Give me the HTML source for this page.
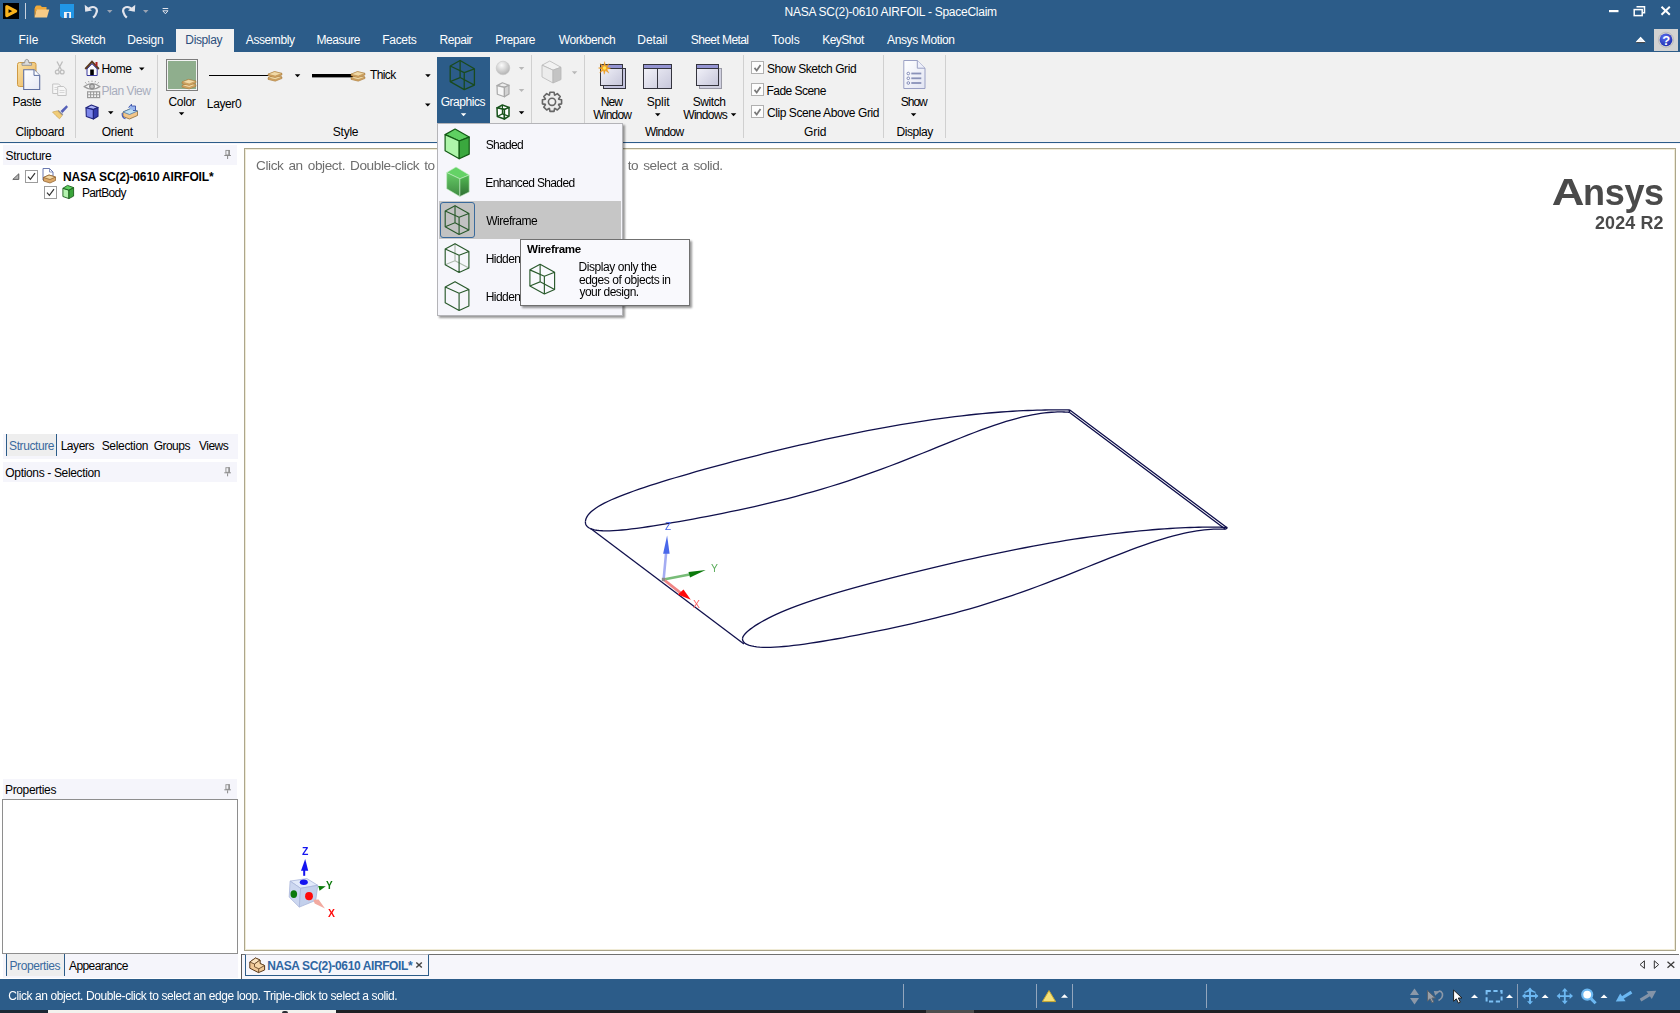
<!DOCTYPE html>
<html><head><meta charset="utf-8"><title>NASA SC(2)-0610 AIRFOIL - SpaceClaim</title><style>
html,body{margin:0;padding:0;}
body{width:1680px;height:1013px;overflow:hidden;background:#fff;position:relative;font-family:"Liberation Sans",sans-serif;}
.t{position:absolute;white-space:pre;}
.b{position:absolute;display:block;overflow:visible;}
</style></head><body>
<div class="b" style="left:0px;top:0px;width:1680px;height:52px;background:#2c5c89;"></div>
<div class="b" style="left:0px;top:52px;width:1680px;height:90px;background:#f1f1f1;"></div>
<div class="b" style="left:0px;top:142px;width:1680px;height:1px;background:#2c5c89;"></div>
<div class="b" style="left:0px;top:143px;width:1680px;height:1px;background:#f3f3fa;"></div>
<div class="b" style="left:176px;top:29px;width:58px;height:23px;background:#f1f1f1;"></div>
<div class="t" style="left:784.54px;top:5.00px;font-size:12px;line-height:14px;color:#fff;letter-spacing:-0.260px;">NASA SC(2)-0610 AIRFOIL - SpaceClaim</div>
<div class="t" style="left:18.54px;top:33.20px;font-size:12px;line-height:14px;color:#fff;letter-spacing:0.207px;">File</div>
<div class="t" style="left:70.66px;top:33.20px;font-size:12px;line-height:14px;color:#fff;letter-spacing:-0.320px;">Sketch</div>
<div class="t" style="left:127.34px;top:33.20px;font-size:12px;line-height:14px;color:#fff;letter-spacing:-0.188px;">Design</div>
<div class="t" style="left:185.34px;top:33.20px;font-size:12px;line-height:14px;color:#2d4f7c;letter-spacing:-0.367px;">Display</div>
<div class="t" style="left:245.80px;top:33.20px;font-size:12px;line-height:14px;color:#fff;letter-spacing:-0.403px;">Assembly</div>
<div class="t" style="left:316.54px;top:33.20px;font-size:12px;line-height:14px;color:#fff;letter-spacing:-0.457px;">Measure</div>
<div class="t" style="left:382.34px;top:33.20px;font-size:12px;line-height:14px;color:#fff;letter-spacing:-0.324px;">Facets</div>
<div class="t" style="left:439.54px;top:33.20px;font-size:12px;line-height:14px;color:#fff;letter-spacing:-0.452px;">Repair</div>
<div class="t" style="left:495.34px;top:33.20px;font-size:12px;line-height:14px;color:#fff;letter-spacing:-0.420px;">Prepare</div>
<div class="t" style="left:558.80px;top:33.20px;font-size:12px;line-height:14px;color:#fff;letter-spacing:-0.445px;">Workbench</div>
<div class="t" style="left:637.34px;top:33.20px;font-size:12px;line-height:14px;color:#fff;letter-spacing:-0.096px;">Detail</div>
<div class="t" style="left:690.76px;top:33.20px;font-size:12px;line-height:14px;color:#fff;letter-spacing:-0.576px;">Sheet Metal</div>
<div class="t" style="left:771.76px;top:33.20px;font-size:12px;line-height:14px;color:#fff;letter-spacing:-0.015px;">Tools</div>
<div class="t" style="left:822.34px;top:33.20px;font-size:12px;line-height:14px;color:#fff;letter-spacing:-0.567px;">KeyShot</div>
<div class="t" style="left:887.00px;top:33.20px;font-size:12px;line-height:14px;color:#fff;letter-spacing:-0.362px;">Ansys Motion</div>
<div class="b" style="left:75px;top:55px;width:1px;height:83px;background:#d0d0d0;"></div>
<div class="b" style="left:157px;top:55px;width:1px;height:83px;background:#d0d0d0;"></div>
<div class="b" style="left:531px;top:55px;width:1px;height:83px;background:#d0d0d0;"></div>
<div class="b" style="left:584px;top:55px;width:1px;height:83px;background:#d0d0d0;"></div>
<div class="b" style="left:743px;top:55px;width:1px;height:83px;background:#d0d0d0;"></div>
<div class="b" style="left:883px;top:55px;width:1px;height:83px;background:#d0d0d0;"></div>
<div class="b" style="left:945px;top:55px;width:1px;height:83px;background:#d0d0d0;"></div>
<div class="t" style="left:15.40px;top:125.00px;font-size:12px;line-height:14px;color:#000;letter-spacing:-0.280px;">Clipboard</div>
<div class="t" style="left:101.76px;top:125.00px;font-size:12px;line-height:14px;color:#000;letter-spacing:-0.280px;">Orient</div>
<div class="t" style="left:332.76px;top:125.00px;font-size:12px;line-height:14px;color:#000;letter-spacing:-0.230px;">Style</div>
<div class="t" style="left:645.00px;top:125.00px;font-size:12px;line-height:14px;color:#000;letter-spacing:-0.704px;">Window</div>
<div class="t" style="left:804.10px;top:125.00px;font-size:12px;line-height:14px;color:#000;letter-spacing:-0.087px;">Grid</div>
<div class="t" style="left:896.54px;top:125.00px;font-size:12px;line-height:14px;color:#000;letter-spacing:-0.433px;">Display</div>
<svg class="b" style="left:0;top:0" width="1680" height="1013" viewBox="0 0 1680 1013"><defs>
<linearGradient id="gPaste" x1="0" y1="0" x2="1" y2="1"><stop offset="0" stop-color="#fbe3a8"/><stop offset="1" stop-color="#e9b25a"/></linearGradient>
<linearGradient id="gWin" x1="0" y1="0" x2="1" y2="1"><stop offset="0" stop-color="#f4f4fb"/><stop offset="1" stop-color="#c9c9dd"/></linearGradient>
<linearGradient id="gDoc" x1="0" y1="0" x2="1" y2="1"><stop offset="0" stop-color="#ffffff"/><stop offset="1" stop-color="#e6e8f4"/></linearGradient>
<radialGradient id="gSph" cx="0.4" cy="0.3" r="0.7"><stop offset="0" stop-color="#fafafa"/><stop offset="1" stop-color="#b9b9b9"/></radialGradient>
<radialGradient id="gHelp" cx="0.4" cy="0.3" r="0.8"><stop offset="0" stop-color="#5a6cf0"/><stop offset="1" stop-color="#1a2aa8"/></radialGradient>
</defs><rect x="3" y="3" width="16" height="16" fill="#000" rx="0" /><path d="M6.9,6.6 L15.6,11.1 L6.9,15.6 Z" fill="none" stroke="#f7b21c" stroke-width="3.3" stroke-linejoin="round"/><rect x="25" y="3" width="1" height="16" fill="#c9d2de" rx="0" /><path d="M35,7 L36.5,5.5 L40.5,5.5 L42,7 L46.5,7 L46.5,10 L35,10 Z" fill="#efa93a" /><path d="M36.5,9.5 L49.3,9.5 L47,17.5 L34.5,17.5 Z" fill="#f8cb86" /><path d="M34.5,8 L36.5,9.5 L34.5,17.5 Z" fill="#e79a2c" /><path d="M60,4 L74,4 L74,18 L62,18 L60,16 Z" fill="#2196e6" /><rect x="64" y="12" width="7" height="6" fill="#f4f4f4" rx="0" /><rect x="66.8" y="13" width="2.4" height="5" fill="#2a78c8" rx="0" /><path d="M86.5,10.5 C 92,4.5 98.5,7 96.5,12.5 C 96,14.5 95,16 93.2,17.6" fill="none" stroke="#e2e4ec" stroke-width="2.2" /><path d="M84.7,4.8 L85.2,11.8 L92,10.6 Z" fill="#e2e4ec" /><polygon points="107,10 112.5,10 109.75,13" fill="#9aa4b4" /><path d="M133.5,10.5 C 128,4.5 121.5,7 123.5,12.5 C 124,14.5 125,16 126.8,17.6" fill="none" stroke="#e2e4ec" stroke-width="2.2" /><path d="M135.3,4.8 L134.8,11.8 L128,10.6 Z" fill="#e2e4ec" /><polygon points="143,10 148.5,10 145.75,13" fill="#9aa4b4" /><rect x="162.6" y="8" width="5.6" height="1" fill="#e2e4ec" rx="0" /><path d="M162.8,10.8 L168,10.8 L165.4,13.8 Z" fill="none" stroke="#e2e4ec" stroke-width="1" /><rect x="1609" y="10" width="9.5" height="2.2" fill="#fff" rx="0" /><path d="M1636.5,6.8 h8 v6 h-2.2" fill="none" stroke="#fff" stroke-width="1.5" /><rect x="1634.2" y="9.6" width="8" height="6" fill="none" stroke="#fff" stroke-width="1.5" rx="0" /><path d="M1661.5,6.8 L1669.8,14.8 M1669.8,6.8 L1661.5,14.8" fill="none" stroke="#fff" stroke-width="2" /><polygon points="1636.6,42 1640.6,37.6 1644.6,42" fill="#e6eef8" stroke="#fff" stroke-width="1.4" stroke-linejoin="round"/><line x1="1636.2" y1="42.6" x2="1645" y2="42.6" stroke="#3a3a3a" stroke-width="1" /><rect x="1654" y="29" width="24" height="22" fill="#d2d2d2" rx="0" /><circle cx="1666" cy="39.8" r="7.6" fill="none" stroke="#bcbcbc" stroke-width="1" /><circle cx="1666" cy="39.8" r="6.4" fill="url(#gHelp)" /><rect x="17.5" y="62.5" width="18.5" height="24" fill="url(#gPaste)" stroke="#cf9a44" stroke-width="1" rx="2" /><path d="M22,65.3 v-2.3 h2.6 q0,-3.6 2.2,-3.6 q2.2,0 2.2,3.6 h2.6 v2.3 Z" fill="#dcdcdc" stroke="#909090" stroke-width="0.9" /><path d="M23.7,69.7 h10.3 l5.7,5.7 v14.1 h-16 Z" fill="url(#gDoc)" stroke="#5f6fa0" stroke-width="1.1" /><path d="M34,69.7 v5.7 h5.7" fill="#fff" stroke="#5f6fa0" stroke-width="1" /><path d="M57,61.5 L61.5,70 M62.5,61.5 L58,70" fill="none" stroke="#bdbdbd" stroke-width="1.3" /><circle cx="57.3" cy="72" r="1.9" fill="none" stroke="#bdbdbd" stroke-width="1.3" /><circle cx="62.2" cy="72" r="1.9" fill="none" stroke="#bdbdbd" stroke-width="1.3" /><path d="M52.7,84 h6 l2.5,2.5 v7 h-8.5 Z" fill="#f6f6f6" stroke="#c4c4c4" stroke-width="1" /><path d="M57.7,86.5 h6 l2.5,2.5 v6.5 h-8.5 Z" fill="#f6f6f6" stroke="#c4c4c4" stroke-width="1" /><path d="M54.5,87.5 h3 M54.5,89.5 h3 M59.5,90.5 h5 M59.5,92.5 h5" fill="none" stroke="#cfcfcf" stroke-width="0.8" /><path d="M60.5,111 L66.5,105.2 L68,107 L62.5,113 Z" fill="#5560b8" /><path d="M58.5,110 L63.3,114.2 L61.8,115.8 L57,111.6 Z" fill="#8c8c9c" /><path d="M52.5,112 L57.5,110.8 L62.2,115.5 L59.5,118.8 Q56,116 52.5,112 Z" fill="#f0cc78" stroke="#c9a048" stroke-width="0.6" /><path d="M85.3,69 L92,61.8 L98.8,69" fill="none" stroke="#5a3a1e" stroke-width="2" /><rect x="95.5" y="62" width="2" height="4" fill="#b02020" rx="0" /><path d="M87,69 v6.5 h10.2 V69 L92,63.8 Z" fill="#fafafa" stroke="#3a3aa0" stroke-width="1" /><rect x="90.2" y="69.5" width="3.6" height="5.5" fill="#000" rx="0" /><polygon points="139,67.5 144.5,67.5 141.75,70.5" fill="#000" /><path d="M84.3,86.6 Q92,80.6 99.7,86.6 Q92,92 84.3,86.6 Z" fill="#f6f6f6" stroke="#9c9c9c" stroke-width="1.3" /><circle cx="92" cy="86.4" r="2.3" fill="#c4c4c4" stroke="#8e8e8e" stroke-width="1.2" /><path d="M86.4,83.6 L85.2,82.2 M89,82.4 L88.5,81 M92,82 V80.6 M95,82.4 L95.5,81 M97.6,83.6 L98.8,82.2" fill="none" stroke="#a4a4a4" stroke-width="1" /><rect x="87.6" y="91.8" width="12" height="5.8" fill="#f6f6f6" stroke="#9c9c9c" stroke-width="1.2" rx="0" /><path d="M90.6,91.8 v5.8 M93.6,91.8 v5.8 M96.6,91.8 v5.8 M87.6,94.7 h12" fill="none" stroke="#9c9c9c" stroke-width="1.1" /><path d="M86.00,107.80 L91.40,105.00 L98.00,107.40 L93.40,109.60 Z" fill="#aab2f6" stroke="#20247c" stroke-width="1.1" stroke-linejoin="round"/><path d="M86.00,107.80 L93.40,109.60 L93.40,119.00 L86.30,116.50 Z" fill="#7c86ea" stroke="#20247c" stroke-width="1.1" stroke-linejoin="round"/><path d="M93.40,109.60 L98.00,107.40 L98.00,116.20 L93.40,119.00 Z" fill="#343cae" stroke="#20247c" stroke-width="1.1" stroke-linejoin="round"/><polygon points="108,111.2 113.5,111.2 110.75,114.2" fill="#000" /><path d="M123,112 L131,108.5 L137.5,111 L137.5,115.5 L129.5,119 L123,116.5 Z" fill="#f2c68a" stroke="#8a6a3a" stroke-width="0.8" /><path d="M123,112 L131,108.5 L137.5,111 L129.5,114.5 Z" fill="#bfe0f2" stroke="#4a78a8" stroke-width="0.8" /><path d="M128.5,107.5 L131.5,104.2 L131.5,106 L135.5,106 L135.5,110.5 L133,110.5" fill="#9ab6ee" stroke="#3a50a8" stroke-width="0.9" /><path d="M122.3,113 Q121.5,117.5 125.5,118.8" fill="none" stroke="#4a60b8" stroke-width="1.2" /></svg>
<div class="t" style="left:12.54px;top:94.60px;font-size:12px;line-height:14px;color:#000;letter-spacing:-0.430px;">Paste</div>
<div class="t" style="left:101.54px;top:61.90px;font-size:12px;line-height:14px;color:#000;letter-spacing:-0.580px;">Home</div>
<div class="t" style="left:101.54px;top:83.60px;font-size:12px;line-height:14px;color:#a8adbd;letter-spacing:-0.462px;">Plan View</div>
<div class="t" style="left:1662.21px;top:33.00px;font-size:13px;line-height:15px;color:#fff;letter-spacing:0.000px;font-weight:bold;">?</div>
<svg class="b" style="left:0;top:0" width="1680" height="1013" viewBox="0 0 1680 1013"><defs>
<linearGradient id="gWin2" x1="0" y1="0" x2="1" y2="1"><stop offset="0" stop-color="#f6f6fc"/><stop offset="1" stop-color="#c6c6da"/></linearGradient>
<linearGradient id="gDoc2" x1="0" y1="0" x2="1" y2="1"><stop offset="0" stop-color="#ffffff"/><stop offset="1" stop-color="#e2e5f3"/></linearGradient>
<radialGradient id="gSph2" cx="0.4" cy="0.3" r="0.7"><stop offset="0" stop-color="#fbfbfb"/><stop offset="1" stop-color="#b4b4b4"/></radialGradient>
</defs><rect x="166.5" y="59.5" width="31" height="31" fill="#f4f4f4" stroke="#7c7c7c" stroke-width="1" rx="0" /><rect x="168" y="61" width="28" height="28" fill="#8fae8d" rx="0" /><path d="M182,85.6 L188.5,83.0 L196,84.8 L196,86.3 L189.2,89.0 L182,87.2 Z" fill="#d9a866" stroke="#9c7030" stroke-width="0.5" /><path d="M182,85.6 L188.5,83.0 L196,84.8 L189.2,87.5 Z" fill="#f1d9a6" stroke="#a87c3c" stroke-width="0.5" /><path d="M182,82.0 L188.5,79.4 L196,81.2 L196,82.7 L189.2,85.4 L182,83.60000000000001 Z" fill="#d9a866" stroke="#9c7030" stroke-width="0.5" /><path d="M182,82.0 L188.5,79.4 L196,81.2 L189.2,83.9 Z" fill="#f1d9a6" stroke="#a87c3c" stroke-width="0.5" /><polygon points="178.8,112.2 184.3,112.2 181.55,115.2" fill="#000" /><rect x="209" y="75" width="60" height="1" fill="#000" rx="0" /><path d="M268,77.79999999999998 L274.5,75.19999999999999 L282,76.99999999999999 L282,78.49999999999999 L275.2,81.19999999999999 L268,79.39999999999999 Z" fill="#d9a866" stroke="#9c7030" stroke-width="0.5" /><path d="M268,77.79999999999998 L274.5,75.19999999999999 L282,76.99999999999999 L275.2,79.69999999999999 Z" fill="#f1d9a6" stroke="#a87c3c" stroke-width="0.5" /><path d="M268,74.19999999999999 L274.5,71.6 L282,73.39999999999999 L282,74.89999999999999 L275.2,77.6 L268,75.8 Z" fill="#d9a866" stroke="#9c7030" stroke-width="0.5" /><path d="M268,74.19999999999999 L274.5,71.6 L282,73.39999999999999 L275.2,76.1 Z" fill="#f1d9a6" stroke="#a87c3c" stroke-width="0.5" /><polygon points="294.8,74.3 300.3,74.3 297.55,77.3" fill="#000" /><rect x="312" y="74" width="41" height="3.4" fill="#000" rx="0" /><path d="M351,77.79999999999998 L357.5,75.19999999999999 L365,76.99999999999999 L365,78.49999999999999 L358.2,81.19999999999999 L351,79.39999999999999 Z" fill="#d9a866" stroke="#9c7030" stroke-width="0.5" /><path d="M351,77.79999999999998 L357.5,75.19999999999999 L365,76.99999999999999 L358.2,79.69999999999999 Z" fill="#f1d9a6" stroke="#a87c3c" stroke-width="0.5" /><path d="M351,74.19999999999999 L357.5,71.6 L365,73.39999999999999 L365,74.89999999999999 L358.2,77.6 L351,75.8 Z" fill="#d9a866" stroke="#9c7030" stroke-width="0.5" /><path d="M351,74.19999999999999 L357.5,71.6 L365,73.39999999999999 L358.2,76.1 Z" fill="#f1d9a6" stroke="#a87c3c" stroke-width="0.5" /><polygon points="425.2,74.3 430.7,74.3 427.95,77.3" fill="#000" /><polygon points="425,103.4 430.5,103.4 427.75,106.4" fill="#000" /><rect x="437" y="57" width="53" height="66.3" fill="#2c5c89" rx="0" /><path d="M450.20,66.03 L460.12,60.50 L474.40,68.79 L464.24,72.61 Z M450.20,66.03 L450.20,81.60 L464.24,89.60 L464.24,72.61 M464.24,89.60 L474.40,85.09 L474.40,68.79" fill="none" stroke="#1a4a1e" stroke-width="1.3" stroke-linejoin="round"/><path d="M460.12,60.50 L460.12,77.49 L450.20,81.60 M460.12,77.49 L474.40,85.09" fill="none" stroke="#1a4a1e" stroke-width="1.3" /><polygon points="460.8,113.3 466.3,113.3 463.55,116.3" fill="#fff" /><circle cx="503" cy="68" r="6.8" fill="url(#gSph2)" stroke="#c8c8c8" stroke-width="0.6" /><polygon points="518.8,67 524.3,67 521.55,70" fill="#b8b8b8" /><path d="M497.00,85.60 L502.40,82.80 L509.00,85.20 L504.40,87.40 Z" fill="#ececec" stroke="#a8a8a8" stroke-width="1.2" stroke-linejoin="round"/><path d="M497.00,85.60 L504.40,87.40 L504.40,96.80 L497.30,94.30 Z" fill="#f6f6f6" stroke="#a8a8a8" stroke-width="1.2" stroke-linejoin="round"/><path d="M504.40,87.40 L509.00,85.20 L509.00,94.00 L504.40,96.80 Z" fill="#d2d2d2" stroke="#a8a8a8" stroke-width="1.2" stroke-linejoin="round"/><polygon points="518.8,89 524.3,89 521.55,92" fill="#b8b8b8" /><path d="M497.00,107.80 L502.40,105.00 L509.00,107.40 L504.40,109.60 Z" fill="#fff" stroke="#17521a" stroke-width="1.5" stroke-linejoin="round"/><path d="M497.00,107.80 L504.40,109.60 L504.40,119.00 L497.30,116.50 Z" fill="#fff" stroke="#17521a" stroke-width="1.5" stroke-linejoin="round"/><path d="M504.40,109.60 L509.00,107.40 L509.00,116.20 L504.40,119.00 Z" fill="#fff" stroke="#17521a" stroke-width="1.5" stroke-linejoin="round"/><path d="M502.40,105.00 L502.40,113.90 L497.30,116.50 M502.40,113.90 L509.00,116.20" fill="none" stroke="#17521a" stroke-width="1.2000000000000002" /><polygon points="518.8,111.2 524.3,111.2 521.55,114.2" fill="#000" /><path d="M542.00,65.18 L549.79,61.00 L561.00,67.27 L553.02,70.15 Z" fill="#f2f2f2" stroke="#b8b8b8" stroke-width="0.8" stroke-linejoin="round"/><path d="M542.00,65.18 L553.02,70.15 L553.02,83.00 L542.00,76.95 Z" fill="#ececec" stroke="#b8b8b8" stroke-width="0.8" stroke-linejoin="round"/><path d="M553.02,70.15 L561.00,67.27 L561.00,79.59 L553.02,83.00 Z" fill="#c4c4c4" stroke="#b8b8b8" stroke-width="0.8" stroke-linejoin="round"/><polygon points="571.8,71.3 577.3,71.3 574.55,74.3" fill="#b8b8b8" /><polygon points="561.58,99.76 561.58,103.84 558.71,104.40 558.59,104.71 560.22,107.13 557.33,110.02 554.91,108.39 554.60,108.51 554.04,111.38 549.96,111.38 549.40,108.51 549.09,108.39 546.67,110.02 543.78,107.13 545.41,104.71 545.29,104.40 542.42,103.84 542.42,99.76 545.29,99.20 545.41,98.89 543.78,96.47 546.67,93.58 549.09,95.21 549.40,95.09 549.96,92.22 554.04,92.22 554.60,95.09 554.91,95.21 557.33,93.58 560.22,96.47 558.59,98.89 558.71,99.20" fill="#ececec" stroke="#666" stroke-width="1.6" stroke-linejoin="round"/><circle cx="552" cy="101.8" r="3.6" fill="#f1f1f1" stroke="#666" stroke-width="1.6" /><rect x="603.5" y="68.5" width="22" height="20" fill="#c4c4de" stroke="#34343e" stroke-width="1" rx="0" /><rect x="600.5" y="64.5" width="22" height="21" fill="url(#gWin2)" stroke="#34343e" stroke-width="1" rx="0" /><rect x="601" y="65" width="21" height="3.2" fill="#9494d2" rx="0" /><line x1="600.5" y1="68.5" x2="622.5" y2="68.5" stroke="#34343e" stroke-width="1" /><path d="M605,58.5 L606.3,64 L610.5,61 L607.8,65.5 L612.5,66.5 L607.8,68 L610.3,72.5 L606,69.5 L604.5,74 L603.5,69.3 L599,72 L601.8,67.7 L597.5,66.3 L602,65 L599.5,60.8 L603.8,63.8 Z" fill="#f5a623" stroke="#e08a10" stroke-width="0.4" transform="translate(604.6 68) scale(0.82) translate(-605 -66.3)"/><circle cx="604.5" cy="68" r="1.7" fill="#ffe45a" /><rect x="643.5" y="64.5" width="28" height="24" fill="url(#gWin2)" stroke="#34343e" stroke-width="1" rx="0" /><rect x="644" y="65" width="27" height="3.2" fill="#9494d2" rx="0" /><line x1="643.5" y1="68.5" x2="671.5" y2="68.5" stroke="#34343e" stroke-width="1" /><line x1="657.5" y1="68" x2="657.5" y2="88.5" stroke="#34343e" stroke-width="1" /><polygon points="655,113.3 660.5,113.3 657.75,116.3" fill="#000" /><rect x="699.5" y="68.5" width="22" height="20" fill="#d0d0e0" stroke="#9a9aa6" stroke-width="1" rx="0" /><rect x="696.5" y="64.5" width="22" height="21" fill="url(#gWin2)" stroke="#34343e" stroke-width="1" rx="0" /><rect x="697" y="65" width="21" height="3.2" fill="#9494d2" rx="0" /><line x1="696.5" y1="68.5" x2="718.5" y2="68.5" stroke="#34343e" stroke-width="1" /><polygon points="730.8,113.3 736.3,113.3 733.55,116.3" fill="#000" /><rect x="751.5" y="61.5" width="12" height="12" fill="#fdfdfd" stroke="#b0b0b0" stroke-width="1" rx="0" /><path d="M754.5,67.9 L756.7,70.6 L760.5,65" fill="none" stroke="#7a7a7a" stroke-width="1.7" /><rect x="751.5" y="83.5" width="12" height="12" fill="#fdfdfd" stroke="#b0b0b0" stroke-width="1" rx="0" /><path d="M754.5,89.9 L756.7,92.6 L760.5,87" fill="none" stroke="#7a7a7a" stroke-width="1.7" /><rect x="751.5" y="105.5" width="12" height="12" fill="#fdfdfd" stroke="#b0b0b0" stroke-width="1" rx="0" /><path d="M754.5,111.9 L756.7,114.6 L760.5,109" fill="none" stroke="#7a7a7a" stroke-width="1.7" /><path d="M903.8,60.5 h13.5 l7.7,7.7 v20.3 h-21.2 Z" fill="url(#gDoc2)" stroke="#9aa0c4" stroke-width="1" /><path d="M917.3,60.5 v7.7 h7.7" fill="#eef0fa" stroke="#9aa0c4" stroke-width="1" /><circle cx="908.3" cy="73.5" r="1.3" fill="#fff" stroke="#6a74a8" stroke-width="0.8" /><rect x="911.3" y="72.6" width="10" height="1.8" fill="#8a92b8" rx="0" /><circle cx="908.3" cy="78.3" r="1.3" fill="#fff" stroke="#6a74a8" stroke-width="0.8" /><rect x="911.3" y="77.39999999999999" width="10" height="1.8" fill="#8a92b8" rx="0" /><circle cx="908.3" cy="83" r="1.3" fill="#fff" stroke="#6a74a8" stroke-width="0.8" /><rect x="911.3" y="82.1" width="10" height="1.8" fill="#8a92b8" rx="0" /><polygon points="910.8,113.3 916.3,113.3 913.55,116.3" fill="#000" /></svg>
<div class="t" style="left:168.60px;top:94.70px;font-size:12px;line-height:14px;color:#000;letter-spacing:-0.400px;">Color</div>
<div class="t" style="left:206.84px;top:96.80px;font-size:12px;line-height:14px;color:#000;letter-spacing:-0.376px;">Layer0</div>
<div class="t" style="left:370.06px;top:67.70px;font-size:12px;line-height:14px;color:#000;letter-spacing:-0.625px;">Thick</div>
<div class="t" style="left:440.70px;top:94.70px;font-size:12px;line-height:14px;color:#fff;letter-spacing:-0.469px;">Graphics</div>
<div class="t" style="left:600.74px;top:94.70px;font-size:12px;line-height:14px;color:#000;letter-spacing:-0.900px;">New</div>
<div class="t" style="left:593.30px;top:107.70px;font-size:12px;line-height:14px;color:#000;letter-spacing:-0.804px;">Window</div>
<div class="t" style="left:646.66px;top:94.70px;font-size:12px;line-height:14px;color:#000;letter-spacing:-0.125px;">Split</div>
<div class="t" style="left:692.76px;top:94.70px;font-size:12px;line-height:14px;color:#000;letter-spacing:-0.416px;">Switch</div>
<div class="t" style="left:683.30px;top:107.70px;font-size:12px;line-height:14px;color:#000;letter-spacing:-0.723px;">Windows</div>
<div class="t" style="left:766.96px;top:61.80px;font-size:12px;line-height:14px;color:#000;letter-spacing:-0.429px;">Show Sketch Grid</div>
<div class="t" style="left:766.54px;top:83.80px;font-size:12px;line-height:14px;color:#000;letter-spacing:-0.549px;">Fade Scene</div>
<div class="t" style="left:766.90px;top:105.70px;font-size:12px;line-height:14px;color:#000;letter-spacing:-0.410px;">Clip Scene Above Grid</div>
<div class="t" style="left:900.76px;top:94.70px;font-size:12px;line-height:14px;color:#000;letter-spacing:-1.007px;">Show</div>
<div class="b" style="left:3px;top:145px;width:234px;height:20px;background:#f5f5fb;"></div>
<div class="t" style="left:5.56px;top:149.00px;font-size:12px;line-height:14px;color:#000;letter-spacing:-0.317px;">Structure</div>
<div class="b" style="left:3px;top:434px;width:235px;height:25px;background:#f5f5fb;"></div>
<div class="b" style="left:6px;top:434px;width:51px;height:22px;background:#eeeeee;border-left:1px solid #2c5c89;border-right:1px solid #2c5c89;box-sizing:border-box;"></div>
<div class="t" style="left:9.06px;top:438.70px;font-size:12px;line-height:14px;color:#3a6a9e;letter-spacing:-0.418px;">Structure</div>
<div class="t" style="left:60.64px;top:438.70px;font-size:12px;line-height:14px;color:#000;letter-spacing:-0.444px;">Layers</div>
<div class="t" style="left:101.66px;top:438.70px;font-size:12px;line-height:14px;color:#000;letter-spacing:-0.315px;">Selection</div>
<div class="t" style="left:153.70px;top:438.70px;font-size:12px;line-height:14px;color:#000;letter-spacing:-0.528px;">Groups</div>
<div class="t" style="left:199.00px;top:438.70px;font-size:12px;line-height:14px;color:#000;letter-spacing:-0.520px;">Views</div>
<div class="b" style="left:3px;top:462px;width:234px;height:20px;background:#f5f5fb;"></div>
<div class="t" style="left:5.36px;top:465.50px;font-size:12px;line-height:14px;color:#000;letter-spacing:-0.347px;">Options - Selection</div>
<div class="b" style="left:3px;top:779px;width:234px;height:20px;background:#f5f5fb;"></div>
<div class="t" style="left:5.04px;top:783.00px;font-size:12px;line-height:14px;color:#000;letter-spacing:-0.371px;">Properties</div>
<div class="b" style="left:2px;top:799px;width:236px;height:155px;background:#fff;border:1px solid #8e8e8e;box-sizing:border-box;"></div>
<div class="b" style="left:3px;top:954px;width:235px;height:24px;background:#f5f5fb;"></div>
<div class="b" style="left:6px;top:954px;width:59px;height:22px;background:#eeeeee;border-left:1px solid #2c5c89;border-right:1px solid #2c5c89;box-sizing:border-box;"></div>
<div class="t" style="left:9.44px;top:959.00px;font-size:12px;line-height:14px;color:#3a6a9e;letter-spacing:-0.393px;">Properties</div>
<div class="t" style="left:69.00px;top:959.00px;font-size:12px;line-height:14px;color:#000;letter-spacing:-0.589px;">Appearance</div>
<div class="t" style="left:63.02px;top:170.00px;font-size:12px;line-height:14px;color:#000;letter-spacing:-0.170px;font-weight:bold;">NASA SC(2)-0610 AIRFOIL*</div>
<div class="t" style="left:81.94px;top:185.90px;font-size:12px;line-height:14px;color:#000;letter-spacing:-0.674px;">PartBody</div>
<svg class="b" style="left:0;top:0" width="1680" height="1013" viewBox="0 0 1680 1013"><rect x="225.9" y="150.4" width="3.4" height="4.6" fill="#f0f0f4" stroke="#909090" stroke-width="0.9" rx="0" /><rect x="228.4" y="150" width="1.3" height="5" fill="#8a8a8a" rx="0" /><rect x="224.3" y="155" width="6.6" height="1" fill="#8a8a8a" rx="0" /><rect x="227.10000000000002" y="156" width="1" height="3" fill="#8a8a8a" rx="0" /><rect x="225.9" y="467.7" width="3.4" height="4.6" fill="#f0f0f4" stroke="#909090" stroke-width="0.9" rx="0" /><rect x="228.4" y="467.3" width="1.3" height="5" fill="#8a8a8a" rx="0" /><rect x="224.3" y="472.3" width="6.6" height="1" fill="#8a8a8a" rx="0" /><rect x="227.10000000000002" y="473.3" width="1" height="3" fill="#8a8a8a" rx="0" /><rect x="225.9" y="784.6999999999999" width="3.4" height="4.6" fill="#f0f0f4" stroke="#909090" stroke-width="0.9" rx="0" /><rect x="228.4" y="784.3" width="1.3" height="5" fill="#8a8a8a" rx="0" /><rect x="224.3" y="789.3" width="6.6" height="1" fill="#8a8a8a" rx="0" /><rect x="227.10000000000002" y="790.3" width="1" height="3" fill="#8a8a8a" rx="0" /><polygon points="18.8,173.8 18.8,179.4 12.8,179.4" fill="#b4b4b4" stroke="#555" stroke-width="0.9" /><rect x="25.5" y="170.5" width="12" height="12" fill="#fff" stroke="#9c9c9c" stroke-width="1" rx="0" /><path d="M28,176.6 L30.4,179.4 L35,173.2" fill="none" stroke="#333" stroke-width="1.2" /><rect x="44.5" y="186.5" width="12" height="12" fill="#fff" stroke="#9c9c9c" stroke-width="1" rx="0" /><path d="M47,192.6 L49.4,195.4 L54,189.2" fill="none" stroke="#333" stroke-width="1.2" /><path d="M43,168.5 h6.5 l3.5,3.5 v8 h-10 Z" fill="#fff" stroke="#6a78b0" stroke-width="1" /><path d="M49.5,168.5 v3.5 h3.5" fill="none" stroke="#6a78b0" stroke-width="0.8" /><path d="M43.5,177.5 L49,175 L55.5,177 L55.5,180.5 L50,183 L43.5,181 Z" fill="#dba868" stroke="#8a5a28" stroke-width="0.7" /><path d="M43.5,177.5 L49,175 L55.5,177 L50,179.5 Z" fill="#f3d8a4" stroke="#8a5a28" stroke-width="0.7" /><path d="M62.9,188.3 L68.9,190.1 L68.9,198.6 L62.9,196.5 Z" fill="#b4f3ae" stroke="#1c5c1c" stroke-width="0.9" stroke-linejoin="round"/><path d="M68.9,190.1 L73.6,187.6 L73.6,196.1 L68.9,198.6 Z" fill="#3aa53a" stroke="#1c5c1c" stroke-width="0.9" stroke-linejoin="round"/><path d="M62.9,188.3 L67.5,185.4 L73.6,187.6 L68.9,190.1 Z" fill="#5fcf5f" stroke="#1c5c1c" stroke-width="0.9" stroke-linejoin="round"/></svg>
<div class="b" style="left:244px;top:148px;width:1432px;height:803px;background:#fff;border:1px solid #aca68c;box-sizing:border-box;"></div>
<div class="b" style="left:245px;top:149px;width:1430px;height:1px;background:#f0ebd6;"></div>
<div class="b" style="left:245px;top:149px;width:1px;height:801px;background:#f0ebd6;"></div>
<div class="b" style="left:245px;top:949px;width:1430px;height:1px;background:#f0ebd6;"></div>
<div class="b" style="left:1674px;top:149px;width:1px;height:801px;background:#f0ebd6;"></div>
<div class="t" style="left:255.62px;top:157.90px;font-size:13.6px;line-height:15px;color:#6e6e6e;letter-spacing:-0.398px;word-spacing:1.6px;will-change:transform;">Click an object. Double-click to select an edge loop. Triple-click to select a solid.</div>
<div class="t" style="left:1551.76px;top:171.20px;font-size:37.8px;line-height:42px;font-weight:bold;color:#4a4a4a;will-change:transform;"><span style="display:inline-block;transform:scaleX(1.199);transform-origin:0.94px 50%;">A</span><span style="font-size:36px;letter-spacing:-0.360px;margin-left:3.81px;">nsys</span></div>
<div class="t" style="left:1595.16px;top:213.20px;font-size:17.9px;line-height:20px;color:#4a4a4a;letter-spacing:0.134px;font-weight:bold;will-change:transform;">2024 R2</div>
<svg class="b" style="left:0;top:0" width="1680" height="1013" viewBox="0 0 1680 1013"><path d="M585.40,521.70 L585.65,520.01 L586.20,518.32 L587.04,516.64 L588.18,514.95 L589.62,513.27 L591.34,511.58 L593.36,509.91 L595.67,508.23 L598.26,506.55 L601.14,504.87 L604.29,503.18 L607.72,501.48 L611.43,499.78 L615.40,498.06 L619.63,496.32 L624.12,494.57 L628.86,492.80 L633.85,491.00 L639.09,489.18 L644.55,487.34 L650.25,485.47 L656.16,483.58 L662.29,481.66 L668.62,479.72 L675.16,477.75 L681.88,475.76 L688.79,473.76 L695.87,471.73 L703.11,469.70 L710.51,467.65 L718.06,465.59 L725.74,463.52 L733.55,461.45 L741.47,459.38 L749.51,457.32 L757.64,455.26 L765.86,453.22 L774.16,451.18 L782.52,449.17 L790.94,447.17 L799.40,445.20 L807.90,443.26 L816.43,441.35 L824.97,439.47 L833.51,437.64 L842.04,435.84 L850.56,434.08 L859.04,432.38 L867.49,430.73 L875.88,429.13 L884.22,427.58 L892.48,426.10 L900.66,424.68 L908.75,423.32 L916.74,422.04 L924.62,420.81 L932.37,419.66 L940.00,418.58 L947.48,417.58 L954.81,416.64 L961.98,415.78 L968.99,414.98 L975.82,414.26 L982.46,413.60 L988.91,413.01 L995.16,412.49 L1001.21,412.02 L1007.03,411.62 L1012.63,411.27 L1018.01,410.97 L1023.15,410.71 L1028.04,410.50 L1032.69,410.33 L1037.08,410.20 L1041.22,410.10 L1045.09,410.02 L1048.69,409.96 L1052.02,409.93 L1055.08,409.91 L1057.85,409.91 L1060.35,409.91 L1062.55,409.92 L1064.47,409.93 L1066.09,409.95 L1067.43,409.97 L1068.46,409.98 L1069.21,409.99 L1069.65,410.00 L1069.80,410.00" fill="none" stroke="#10104c" stroke-width="1.3" stroke-linejoin="round"/><path d="M585.40,521.70 L585.46,523.15 L585.83,524.49 L586.50,525.69 L587.47,526.77 L588.75,527.72 L590.32,528.55 L592.20,529.24 L594.37,529.81 L596.83,530.25 L599.58,530.57 L602.62,530.76 L605.95,530.83 L609.55,530.79 L613.42,530.63 L617.56,530.37 L621.97,530.00 L626.63,529.53 L631.54,528.97 L636.70,528.31 L642.09,527.57 L647.72,526.75 L653.57,525.85 L659.64,524.88 L665.92,523.83 L672.39,522.73 L679.06,521.56 L685.92,520.33 L692.95,519.04 L700.14,517.69 L707.50,516.28 L715.00,514.81 L722.65,513.28 L730.42,511.69 L738.32,510.03 L746.33,508.30 L754.44,506.51 L762.64,504.63 L770.93,502.68 L779.29,500.64 L787.71,498.51 L796.18,496.30 L804.70,493.99 L813.24,491.59 L821.81,489.09 L830.39,486.50 L838.97,483.81 L847.54,481.04 L856.09,478.17 L864.61,475.23 L873.08,472.22 L881.50,469.14 L889.86,466.01 L898.14,462.85 L906.33,459.65 L914.43,456.45 L922.42,453.26 L930.29,450.08 L938.03,446.95 L945.63,443.88 L953.08,440.88 L960.37,437.98 L967.49,435.18 L974.43,432.51 L981.18,429.98 L987.74,427.61 L994.08,425.39 L1000.22,423.35 L1006.12,421.48 L1011.80,419.80 L1017.24,418.30 L1022.44,416.98 L1027.39,415.84 L1032.08,414.87 L1036.51,414.06 L1040.68,413.41 L1044.57,412.90 L1048.19,412.51 L1051.54,412.24 L1054.60,412.06 L1057.38,411.97 L1059.87,411.93 L1062.07,411.95 L1063.99,411.99 L1065.61,412.06 L1066.94,412.13 L1067.97,412.20 L1068.71,412.25 L1069.15,412.29 L1069.30,412.30" fill="none" stroke="#10104c" stroke-width="1.3" stroke-linejoin="round"/><path d="M742.50,638.60 L742.71,637.54 L743.23,636.38 L744.05,635.11 L745.17,633.75 L746.59,632.29 L748.31,630.74 L750.33,629.12 L752.64,627.42 L755.24,625.66 L758.12,623.84 L761.29,621.97 L764.74,620.07 L768.45,618.13 L772.44,616.16 L776.69,614.18 L781.20,612.18 L785.96,610.17 L790.97,608.16 L796.22,606.15 L801.70,604.14 L807.40,602.13 L813.33,600.13 L819.47,598.12 L825.81,596.13 L832.35,594.13 L839.08,592.14 L845.99,590.14 L853.07,588.15 L860.32,586.15 L867.72,584.15 L875.27,582.15 L882.95,580.14 L890.76,578.13 L898.69,576.12 L906.73,574.10 L914.86,572.09 L923.08,570.08 L931.39,568.08 L939.75,566.09 L948.18,564.12 L956.65,562.16 L965.15,560.23 L973.68,558.33 L982.22,556.45 L990.77,554.62 L999.31,552.83 L1007.83,551.09 L1016.32,549.39 L1024.77,547.75 L1033.17,546.17 L1041.51,544.65 L1049.78,543.19 L1057.97,541.79 L1066.06,540.46 L1074.05,539.20 L1081.93,538.00 L1089.69,536.88 L1097.32,535.82 L1104.80,534.83 L1112.14,533.91 L1119.32,533.05 L1126.33,532.27 L1133.16,531.54 L1139.81,530.88 L1146.27,530.29 L1152.52,529.75 L1158.57,529.27 L1164.40,528.85 L1170.01,528.49 L1175.38,528.17 L1180.53,527.91 L1185.42,527.69 L1190.08,527.51 L1194.47,527.37 L1198.61,527.27 L1202.49,527.20 L1206.09,527.16 L1209.42,527.14 L1212.48,527.14 L1215.25,527.16 L1217.75,527.18 L1219.95,527.22 L1221.87,527.25 L1223.49,527.29 L1224.83,527.33 L1225.86,527.36 L1226.61,527.38 L1227.05,527.40 L1227.20,527.40" fill="none" stroke="#10104c" stroke-width="1.3" stroke-linejoin="round"/><path d="M742.50,638.60 L742.57,639.83 L742.95,640.97 L743.63,642.04 L744.61,643.01 L745.88,643.89 L747.46,644.68 L749.33,645.37 L751.49,645.97 L753.95,646.46 L756.69,646.84 L759.72,647.12 L763.03,647.29 L766.61,647.35 L770.47,647.30 L774.60,647.14 L778.99,646.88 L783.64,646.51 L788.53,646.04 L793.68,645.47 L799.06,644.80 L804.67,644.04 L810.50,643.19 L816.56,642.26 L822.82,641.24 L829.28,640.16 L835.93,639.00 L842.77,637.77 L849.79,636.47 L856.97,635.11 L864.31,633.69 L871.80,632.21 L879.43,630.66 L887.19,629.05 L895.08,627.37 L903.07,625.62 L911.16,623.80 L919.35,621.91 L927.62,619.94 L935.96,617.88 L944.37,615.74 L952.82,613.51 L961.32,611.19 L969.85,608.77 L978.41,606.26 L986.97,603.65 L995.53,600.96 L1004.08,598.17 L1012.62,595.29 L1021.12,592.34 L1029.57,589.32 L1037.98,586.24 L1046.32,583.12 L1054.58,579.95 L1062.76,576.77 L1070.84,573.58 L1078.81,570.40 L1086.66,567.25 L1094.38,564.15 L1101.97,561.11 L1109.40,558.15 L1116.67,555.28 L1123.78,552.53 L1130.70,549.90 L1137.43,547.41 L1143.97,545.07 L1150.30,542.89 L1156.42,540.88 L1162.32,539.04 L1167.98,537.38 L1173.41,535.89 L1178.60,534.58 L1183.54,533.43 L1188.22,532.44 L1192.64,531.61 L1196.80,530.93 L1200.69,530.37 L1204.31,529.94 L1207.65,529.61 L1210.70,529.38 L1213.48,529.22 L1215.97,529.13 L1218.17,529.08 L1220.09,529.07 L1221.71,529.09 L1223.03,529.11 L1224.07,529.15 L1224.81,529.17 L1225.25,529.19 L1225.40,529.20" fill="none" stroke="#10104c" stroke-width="1.3" stroke-linejoin="round"/><path d="M590.6,528.4 L744,644" fill="none" stroke="#10104c" stroke-width="1.3" /><path d="M1069.8,410 L1227.4,528 M1069.3,412.3 L1225.4,529.2 M1069.8,410 L1069.3,412.3 M1227.4,528 L1225.4,529.2" fill="none" stroke="#10104c" stroke-width="1.3" /><line x1="663.6" y1="579.5" x2="666.1" y2="553" stroke="#a4acf2" stroke-width="2.6" /><polygon points="667.1,535.5 663.1,553.8 669.6,553.8" fill="#4a68ea" /><line x1="663.6" y1="579.5" x2="689.5" y2="574.5" stroke="#78bc78" stroke-width="2.6" /><polygon points="705.7,570 688.5,572 690,577.5" fill="#0b7a0b" /><line x1="663.6" y1="579.5" x2="680.5" y2="592.8" stroke="#f08484" stroke-width="2.8" /><polygon points="690.8,599.8 677.8,594.5 683.5,589.5" fill="#ff0a0a" /><rect x="661.8" y="577.8" width="3.4" height="3.4" fill="#8c8c8c" rx="0" /><polygon points="290.1,881.1 306.9,878.6 317.8,885.3 300.6,888.3" fill="#e2eafa" stroke="#a9b6da" stroke-width="0.8" /><polygon points="290.1,881.1 300.6,888.3 299.3,907.1 289.2,897.1" fill="#ccd7f0" stroke="#a9b6da" stroke-width="0.8" /><polygon points="300.6,888.3 317.8,885.3 315.7,900.4 299.3,907.1" fill="#c3d0ec" stroke="#a9b6da" stroke-width="0.8" /><ellipse cx="303.8" cy="882.2" rx="4" ry="2.7" fill="#1414f0"/><ellipse cx="293.8" cy="894.1" rx="3.3" ry="3.9" fill="#0b7a0b"/><ellipse cx="309" cy="896.2" rx="3.9" ry="4.1" fill="#ff0a0a"/><line x1="304.2" y1="866" x2="304.2" y2="875.8" stroke="#1414f0" stroke-width="2" /><polygon points="305.2,859.1 301,870.8 308.2,870.8" fill="#1414f0" /><polygon points="318.2,886 325.8,886.2 319.6,890.8" fill="#0b7a0b" /><polygon points="313.4,899.8 318.6,899.4 325,908.4 314.6,903.6" fill="#f2aaa0" /></svg>
<div class="t" style="left:664.70px;top:520.90px;font-size:10px;line-height:11px;color:#4464ea;letter-spacing:0.000px;will-change:transform;">Z</div>
<div class="t" style="left:710.89px;top:562.70px;font-size:10.4px;line-height:11px;color:#5aac5a;letter-spacing:0.000px;will-change:transform;">Y</div>
<div class="t" style="left:693.49px;top:598.70px;font-size:10.4px;line-height:11px;color:#ff6464;letter-spacing:0.000px;will-change:transform;">X</div>
<div class="t" style="left:302.24px;top:846.10px;font-size:10.4px;line-height:11px;color:#1414f0;letter-spacing:0.000px;font-weight:bold;will-change:transform;">Z</div>
<div class="t" style="left:326.05px;top:880.10px;font-size:10px;line-height:11px;color:#0b7a0b;letter-spacing:0.000px;font-weight:bold;will-change:transform;">Y</div>
<div class="t" style="left:327.95px;top:907.80px;font-size:10.4px;line-height:11px;color:#ff0a0a;letter-spacing:0.000px;font-weight:bold;will-change:transform;">X</div>
<div class="b" style="left:241px;top:955px;width:1439px;height:24px;background:#f6f6fb;"></div>
<div class="b" style="left:241px;top:954px;width:1438px;height:1px;background:#707070;"></div>
<div class="b" style="left:241px;top:954px;width:1px;height:25px;background:#5a5a5a;"></div>
<div class="b" style="left:245px;top:954px;width:184px;height:22px;background:#f6f6fb;border:1px solid #2c5c89;border-top:1px solid #b8b8bc;box-sizing:border-box;"></div>
<div class="t" style="left:267.22px;top:958.80px;font-size:12px;line-height:14px;color:#2f66a2;letter-spacing:-0.397px;font-weight:bold;">NASA SC(2)-0610 AIRFOIL*</div>
<div class="b" style="left:0px;top:979px;width:1680px;height:31px;background:#2c5c89;"></div>
<div class="b" style="left:0px;top:1010px;width:1680px;height:3px;background:#1e2024;"></div>
<div class="b" style="left:0px;top:1010px;width:48px;height:3px;background:#1b2834;"></div>
<div class="b" style="left:48px;top:1010px;width:288px;height:3px;background:#f3f2ee;"></div>
<div class="b" style="left:282px;top:1011px;width:6px;height:2px;background:#2a2e34;border-radius:3px 3px 0 0;"></div>
<div class="b" style="left:926px;top:1010px;width:48px;height:3px;background:#4e4e4e;"></div>
<div class="t" style="left:8.20px;top:988.70px;font-size:12px;line-height:14px;color:#fff;letter-spacing:-0.407px;">Click an object. Double-click to select an edge loop. Triple-click to select a solid.</div>
<svg class="b" style="left:0;top:0" width="1680" height="1013" viewBox="0 0 1680 1013"><path d="M249.8,962 L255.5,958 L260,960 L260,963.5 L264.6,965.5 L264.6,970 L258.5,972.6 L249.8,968.2 Z" fill="#f0c896" stroke="#5a3a1a" stroke-width="1" stroke-linejoin="round"/><path d="M249.8,962 L255.5,958 L260,960 L254.5,964 Z" fill="#fbe4c0" stroke="#5a3a1a" stroke-width="0.8" stroke-linejoin="round"/><path d="M254.5,964 L254.5,966.8 L258.8,968.8 L264.6,965.5 L260,963.5 L260,960 Z" fill="#f6d6a8" stroke="#5a3a1a" stroke-width="0.8" stroke-linejoin="round"/><path d="M258.8,968.8 L258.5,972.6" fill="none" stroke="#5a3a1a" stroke-width="0.8" /><path d="M416.3,962.5 L421.8,967.5 M421.8,962.5 L416.3,967.5" fill="none" stroke="#444" stroke-width="1.5" /><polygon points="1644.4,960.8 1644.4,968.4 1640,964.6" fill="none" stroke="#333" stroke-width="1" /><polygon points="1654.3,960.8 1654.3,968.4 1658.7,964.6" fill="none" stroke="#333" stroke-width="1" /><path d="M1667.5,961.7 L1674.3,967.8 M1674.3,961.7 L1667.5,967.8" fill="none" stroke="#3a3a3a" stroke-width="1.25" /><rect x="903" y="984" width="1" height="24" fill="#93a6bd" rx="0" /><rect x="1036" y="984" width="1" height="24" fill="#93a6bd" rx="0" /><rect x="1072" y="984" width="1" height="24" fill="#93a6bd" rx="0" /><rect x="1206" y="984" width="1" height="24" fill="#93a6bd" rx="0" /><rect x="1517" y="984" width="1" height="24" fill="#8a9cb4" rx="0" /><path d="M1049,990.6 L1055.6,1001.6 L1042.4,1001.6 Z" fill="#f6e27a" stroke="#c9a830" stroke-width="1" stroke-linejoin="round"/><polygon points="1061,997.8 1068,997.8 1064.5,994.3" fill="#fff" /><polygon points="1410,995 1419,995 1414.5,988.5" fill="#8c98a8" /><polygon points="1410,998 1419,998 1414.5,1004.5" fill="#8c98a8" /><polygon points="1427.5,990.5 1427.5,1001.1 1430.1,998.8 1432.0,1002.8 1433.8,1001.9 1431.9,998.0 1435.4,998.0" fill="#9aa0a8" stroke="#5c646e" stroke-width="1" stroke-linejoin="round"/><path d="M1436,994 Q1440,988.5 1442.4,993.5 Q1443.2,998 1438.5,1000.5" fill="none" stroke="#8c98a8" stroke-width="1.6" /><polygon points="1433.8,991 1438.4,991.2 1435.2,995.8" fill="#8c98a8" /><polygon points="1453.6,990.0 1453.6,1001.3 1456.3,998.8 1458.4,1003.1 1460.4,1002.2 1458.3,998.0 1462.0,998.0" fill="#fff" stroke="#222" stroke-width="1" stroke-linejoin="round"/><polygon points="1471,998.0 1478,998.0 1474.5,994.5" fill="#fff" /><rect x="1486.6" y="991" width="15" height="10.6" fill="none" stroke="#7cc0f4" stroke-width="2" rx="0" stroke-dasharray="4.2 2.6"/><polygon points="1506,998.0 1513,998.0 1509.5,994.5" fill="#fff" /><path d="M1530,988.5 L1530,1003.5 M1523,996 L1537.5,996" fill="none" stroke="#6cb8f2" stroke-width="2" /><polygon points="1527,991 1533,991 1530,987.6" fill="#6cb8f2" /><polygon points="1527,1001.2 1533,1001.2 1530,1004.6" fill="#6cb8f2" /><polygon points="1525.4,993 1525.4,999 1522,996" fill="#6cb8f2" /><polygon points="1535,993 1535,999 1538.4,996" fill="#6cb8f2" /><path d="M1524.5,992.5 Q1530,989 1535.5,992.5" fill="none" stroke="#6cb8f2" stroke-width="1.4" /><polygon points="1541.6,998.0 1548.6,998.0 1545.1,994.5" fill="#fff" /><path d="M1564.8,989.5 L1564.8,1002.8 M1558,996.1 L1571.6,996.1" fill="none" stroke="#6cb8f2" stroke-width="1.8" /><polygon points="1561.8,991.4 1567.8,991.4 1564.8,988" fill="#6cb8f2" /><polygon points="1561.8,1000.8 1567.8,1000.8 1564.8,1004.2" fill="#6cb8f2" /><polygon points="1560,993.1 1560,999.1 1556.6,996.1" fill="#6cb8f2" /><polygon points="1569.6,993.1 1569.6,999.1 1573,996.1" fill="#6cb8f2" /><circle cx="1587.2" cy="994.6" r="5" fill="#fff" stroke="#6cb8f2" stroke-width="2.2" /><path d="M1591,998.6 L1595.6,1003.2" fill="none" stroke="#6cb8f2" stroke-width="3" /><polygon points="1600.5,998.0 1607.5,998.0 1604.0,994.5" fill="#fff" /><path d="M1631.5,992.2 L1622,998" fill="none" stroke="#6cb8f2" stroke-width="3.2" /><polygon points="1615.8,1001.6 1620.2,993.4 1625.6,1001.2" fill="#6cb8f2" /><path d="M1640.5,1000.2 L1650,994.4" fill="none" stroke="#8494a8" stroke-width="3.2" /><polygon points="1656.2,990.8 1651.8,999 1646.4,991.2" fill="#8494a8" /></svg>
<div class="b" style="left:437px;top:123px;width:186px;height:193px;background:#f6f6fb;border:1px solid #b4b4b8;box-sizing:border-box;box-shadow:2px 2px 2px rgba(0,0,0,0.4);"></div>
<div class="b" style="left:439px;top:201px;width:182px;height:37.5px;background:#c6c6c6;"></div>
<div class="b" style="left:440px;top:202px;width:35px;height:36px;background:#c2c2c2;border:1px solid #3a6a9c;border-radius:3px;box-sizing:border-box;"></div>
<div class="t" style="left:485.66px;top:137.60px;font-size:12px;line-height:14px;color:#000;letter-spacing:-0.676px;">Shaded</div>
<div class="t" style="left:485.34px;top:175.90px;font-size:12px;line-height:14px;color:#000;letter-spacing:-0.641px;">Enhanced Shaded</div>
<div class="t" style="left:486.30px;top:213.70px;font-size:12px;line-height:14px;color:#000;letter-spacing:-0.505px;">Wireframe</div>
<div class="t" style="left:485.74px;top:251.60px;font-size:12px;line-height:14px;color:#000;letter-spacing:-0.572px;">Hidden Line</div>
<div class="t" style="left:485.74px;top:289.80px;font-size:12px;line-height:14px;color:#000;letter-spacing:-0.572px;">Hidden Line Removed</div>
<svg class="b" style="left:0;top:0" width="1680" height="1013" viewBox="0 0 1680 1013"><defs>
<linearGradient id="gEL" x1="0" y1="0" x2="0" y2="1"><stop offset="0" stop-color="#66cc66"/><stop offset="1" stop-color="#3f8a42"/></linearGradient>
<linearGradient id="gER" x1="0" y1="0" x2="0" y2="1"><stop offset="0" stop-color="#52bc54"/><stop offset="1" stop-color="#306e34"/></linearGradient>
</defs><path d="M445.10,134.64 L455.08,129.10 L469.20,137.09 L459.22,140.94 Z" fill="#5fd062" stroke="#125a14" stroke-width="1.2" stroke-linejoin="round"/><path d="M445.10,134.64 L459.22,140.94 L459.22,158.70 L445.10,150.80 Z" fill="#aef5aa" stroke="#125a14" stroke-width="1.2" stroke-linejoin="round"/><path d="M459.22,140.94 L469.20,137.09 L469.20,154.11 L459.22,158.70 Z" fill="#3aa83e" stroke="#125a14" stroke-width="1.2" stroke-linejoin="round"/><path d="M446.70,172.54 L456.01,167.00 L469.20,174.99 L459.88,178.84 Z" fill="#64d266" stroke="#c4efc4" stroke-width="0.6" stroke-linejoin="round"/><path d="M446.70,172.54 L459.88,178.84 L459.88,196.60 L446.70,188.70 Z" fill="url(#gEL)" stroke="#c4efc4" stroke-width="0.6" stroke-linejoin="round"/><path d="M459.88,178.84 L469.20,174.99 L469.20,192.01 L459.88,196.60 Z" fill="url(#gER)" stroke="#c4efc4" stroke-width="0.6" stroke-linejoin="round"/><path d="M455.01,205.70 L455.01,222.69 L445.20,226.81 M455.01,222.69 L468.90,230.04" fill="none" stroke="#2a5a2c" stroke-width="1.15" /><path d="M445.20,211.09 L455.01,205.70 L468.90,213.48 L459.09,217.22 Z M445.20,211.09 L445.20,226.81 L459.09,234.50 L459.09,217.22 M459.09,234.50 L468.90,230.04 L468.90,213.48" fill="none" stroke="#2a5a2c" stroke-width="1.15" stroke-linejoin="round"/><path d="M455.01,243.70 L455.01,260.69 L445.20,264.81 M455.01,260.69 L468.90,268.04" fill="none" stroke="#aab8aa" stroke-width="1.15" /><path d="M445.20,249.09 L455.01,243.70 L468.90,251.48 L459.09,255.22 Z M445.20,249.09 L445.20,264.81 L459.09,272.50 L459.09,255.22 M459.09,272.50 L468.90,268.04 L468.90,251.48" fill="none" stroke="#2a5a2c" stroke-width="1.15" stroke-linejoin="round"/><path d="M445.20,287.09 L455.01,281.70 L468.90,289.48 L459.09,293.22 Z M445.20,287.09 L445.20,302.81 L459.09,310.50 L459.09,293.22 M459.09,310.50 L468.90,306.04 L468.90,289.48" fill="none" stroke="#2a5a2c" stroke-width="1.15" stroke-linejoin="round"/></svg>
<div class="b" style="left:520px;top:239px;width:170px;height:67px;background:#f9f9fd;border:1px solid #707070;box-sizing:border-box;box-shadow:2px 2px 2px rgba(0,0,0,0.4);"></div>
<div class="t" style="left:527.10px;top:242.70px;font-size:11.6px;line-height:12px;color:#000;letter-spacing:-0.308px;font-weight:bold;">Wireframe</div>
<div class="t" style="left:578.44px;top:259.90px;font-size:12px;line-height:14px;color:#000;letter-spacing:-0.412px;">Display only the</div>
<div class="t" style="left:578.92px;top:272.60px;font-size:12px;line-height:14px;color:#000;letter-spacing:-0.443px;">edges of objects in</div>
<div class="t" style="left:579.40px;top:284.70px;font-size:12px;line-height:14px;color:#000;letter-spacing:-0.511px;">your design.</div>
<svg class="b" style="left:0;top:0" width="1680" height="1013" viewBox="0 0 1680 1013"><path d="M540.13,264.30 L540.13,281.82 L529.90,286.07 M540.13,281.82 L554.60,289.40" fill="none" stroke="#2a5a2c" stroke-width="1.15" /><path d="M529.90,269.85 L540.13,264.30 L554.60,272.32 L544.37,276.18 Z M529.90,269.85 L529.90,286.07 L544.37,294.00 L544.37,276.18 M544.37,294.00 L554.60,289.40 L554.60,272.32" fill="none" stroke="#2a5a2c" stroke-width="1.15" stroke-linejoin="round"/></svg>
</body></html>
